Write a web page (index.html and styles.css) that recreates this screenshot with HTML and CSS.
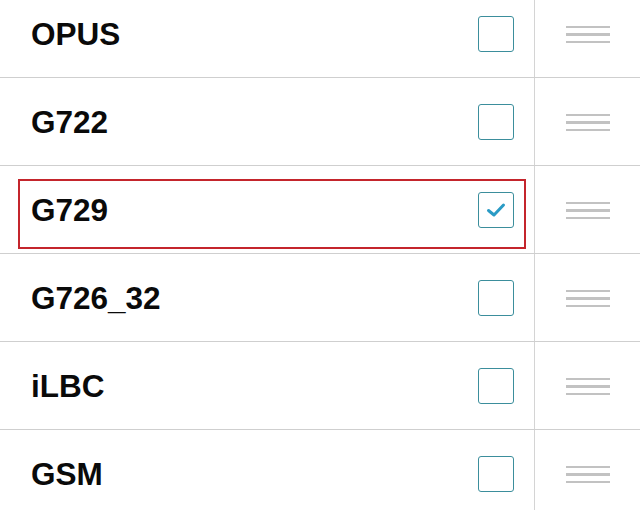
FILE: index.html
```html
<!DOCTYPE html>
<html>
<head>
<meta charset="utf-8">
<link rel="stylesheet" href="styles.css">
</head>
<body>
<ul class="codec-list">
  <li class="row">
    <div class="main"><span class="name">OPUS</span><span class="check"></span></div>
    <div class="handle"><i></i><i></i><i></i></div>
  </li>
  <li class="row">
    <div class="main"><span class="name">G722</span><span class="check"></span></div>
    <div class="handle"><i></i><i></i><i></i></div>
  </li>
  <li class="row highlighted">
    <div class="main"><span class="name">G729</span><span class="check checked"><svg viewBox="0 0 36 36" width="36" height="36"><path d="M10.5 18.5 L16 23 L25.5 13" fill="none" stroke="#2a9bc5" stroke-width="3" stroke-linecap="round" stroke-linejoin="round"/></svg></span></div>
    <div class="handle"><i></i><i></i><i></i></div>
    <div class="highlight-box"></div>
  </li>
  <li class="row">
    <div class="main"><span class="name">G726_32</span><span class="check"></span></div>
    <div class="handle"><i></i><i></i><i></i></div>
  </li>
  <li class="row">
    <div class="main"><span class="name">iLBC</span><span class="check"></span></div>
    <div class="handle"><i></i><i></i><i></i></div>
  </li>
  <li class="row">
    <div class="main"><span class="name">GSM</span><span class="check"></span></div>
    <div class="handle"><i></i><i></i><i></i></div>
  </li>
</ul>
</body>
</html>
```
FILE: styles.css
```css
html, body {
  margin: 0;
  padding: 0;
  background: #ffffff;
  overflow: hidden;
}
.codec-list {
  list-style: none;
  margin: -10px 0 0 0;
  padding: 0;
  font-family: "Liberation Sans", Arial, sans-serif;
}
.row {
  position: relative;
  display: grid;
  grid-template-columns: 535px 1fr;
  height: 88px;
  border-bottom: 1px solid #cfcfcf;
  box-sizing: border-box;
}
.main {
  display: flex;
  align-items: center;
  justify-content: space-between;
  padding: 0 20px 0 31px;
  border-right: 1px solid #d4d4d4;
}
.name {
  font-size: 31.5px;
  font-weight: 700;
  color: #0a0a0a;
  padding-top: 2px;
}
.check {
  width: 36px;
  height: 36px;
  box-sizing: border-box;
  border: 1.5px solid #3b8e9c;
  border-radius: 3px;
  display: flex;
  align-items: center;
  justify-content: center;
  margin-top: 1px;
}
.check svg {
  display: block;
  flex: none;
}
.handle {
  display: flex;
  flex-direction: column;
  align-items: center;
  justify-content: center;
  gap: 5px;
  padding-top: 2px;
}
.handle i {
  display: block;
  width: 44px;
  height: 2.5px;
  background: #c2c2c2;
}
.highlight-box {
  position: absolute;
  left: 18px;
  top: 13px;
  width: 508px;
  height: 70px;
  box-sizing: border-box;
  border: 2px solid #c4252c;
  pointer-events: none;
}
```
